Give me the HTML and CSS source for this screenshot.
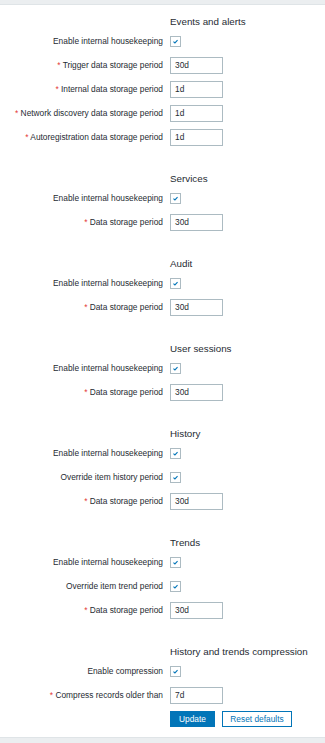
FILE: index.html
```html
<!DOCTYPE html>
<html>
<head>
<meta charset="utf-8">
<link rel="stylesheet" href="styles.css">
</head>
<body>
<div class="page">
  <form class="form">
    <section class="section">
      <div class="row head"><div class="label"></div><div class="field"><span class="title">Events and alerts</span></div></div>
      <div class="row"><div class="label">Enable internal housekeeping</div><div class="field"><span class="cb"><svg viewBox="0 0 11 11"><path d="M3 5.6 L4.8 7.2 L8 3.8" /></svg></span></div></div>
      <div class="row"><div class="label"><span class="req">*</span> Trigger data storage period</div><div class="field"><span class="input">30d</span></div></div>
      <div class="row"><div class="label"><span class="req">*</span> Internal data storage period</div><div class="field"><span class="input">1d</span></div></div>
      <div class="row"><div class="label"><span class="req">*</span> Network discovery data storage period</div><div class="field"><span class="input">1d</span></div></div>
      <div class="row"><div class="label"><span class="req">*</span> Autoregistration data storage period</div><div class="field"><span class="input">1d</span></div></div>
    </section>
    <section class="section">
      <div class="row head"><div class="label"></div><div class="field"><span class="title">Services</span></div></div>
      <div class="row"><div class="label">Enable internal housekeeping</div><div class="field"><span class="cb"><svg viewBox="0 0 11 11"><path d="M3 5.6 L4.8 7.2 L8 3.8" /></svg></span></div></div>
      <div class="row"><div class="label"><span class="req">*</span> Data storage period</div><div class="field"><span class="input">30d</span></div></div>
    </section>
    <section class="section">
      <div class="row head"><div class="label"></div><div class="field"><span class="title">Audit</span></div></div>
      <div class="row"><div class="label">Enable internal housekeeping</div><div class="field"><span class="cb"><svg viewBox="0 0 11 11"><path d="M3 5.6 L4.8 7.2 L8 3.8" /></svg></span></div></div>
      <div class="row"><div class="label"><span class="req">*</span> Data storage period</div><div class="field"><span class="input">30d</span></div></div>
    </section>
    <section class="section">
      <div class="row head"><div class="label"></div><div class="field"><span class="title">User sessions</span></div></div>
      <div class="row"><div class="label">Enable internal housekeeping</div><div class="field"><span class="cb"><svg viewBox="0 0 11 11"><path d="M3 5.6 L4.8 7.2 L8 3.8" /></svg></span></div></div>
      <div class="row"><div class="label"><span class="req">*</span> Data storage period</div><div class="field"><span class="input">30d</span></div></div>
    </section>
    <section class="section">
      <div class="row head"><div class="label"></div><div class="field"><span class="title">History</span></div></div>
      <div class="row"><div class="label">Enable internal housekeeping</div><div class="field"><span class="cb"><svg viewBox="0 0 11 11"><path d="M3 5.6 L4.8 7.2 L8 3.8" /></svg></span></div></div>
      <div class="row"><div class="label">Override item history period</div><div class="field"><span class="cb"><svg viewBox="0 0 11 11"><path d="M3 5.6 L4.8 7.2 L8 3.8" /></svg></span></div></div>
      <div class="row"><div class="label"><span class="req">*</span> Data storage period</div><div class="field"><span class="input">30d</span></div></div>
    </section>
    <section class="section">
      <div class="row head"><div class="label"></div><div class="field"><span class="title">Trends</span></div></div>
      <div class="row"><div class="label">Enable internal housekeeping</div><div class="field"><span class="cb"><svg viewBox="0 0 11 11"><path d="M3 5.6 L4.8 7.2 L8 3.8" /></svg></span></div></div>
      <div class="row"><div class="label">Override item trend period</div><div class="field"><span class="cb"><svg viewBox="0 0 11 11"><path d="M3 5.6 L4.8 7.2 L8 3.8" /></svg></span></div></div>
      <div class="row"><div class="label"><span class="req">*</span> Data storage period</div><div class="field"><span class="input">30d</span></div></div>
    </section>
    <section class="section">
      <div class="row head"><div class="label"></div><div class="field"><span class="title">History and trends compression</span></div></div>
      <div class="row"><div class="label">Enable compression</div><div class="field"><span class="cb"><svg viewBox="0 0 11 11"><path d="M3 5.6 L4.8 7.2 L8 3.8" /></svg></span></div></div>
      <div class="row"><div class="label"><span class="req">*</span> Compress records older than</div><div class="field"><span class="input">7d</span></div></div>
      <div class="row"><div class="label"></div><div class="field buttons"><span class="btn primary">Update</span><span class="btn secondary">Reset defaults</span></div></div>
    </section>
  </form>
</div>
</body>
</html>
```
FILE: styles.css
```css
html, body {
  margin: 0;
  padding: 0;
}
body {
  background: #ebeef0;
  font-family: "Liberation Sans", Arial, sans-serif;
  color: #1f2c33;
  font-size: 8.35px;
  height: 743px;
}
.page {
  margin-top: 4px;
  background: #ffffff;
  border-top: 1px solid #dfe4e7;
  border-bottom: 1px solid #dfe4e7;
  height: 734px;
  box-sizing: border-box;
}
.form {
  padding-top: 8px;
  display: flex;
  flex-direction: column;
  gap: 21px;
}
.section {
  display: flex;
  flex-direction: column;
}
.row {
  display: grid;
  grid-template-columns: 163px 1fr;
  column-gap: 7px;
  height: 24px;
  align-items: center;
}
.row.head {
  height: 16px;
}
.label {
  text-align: right;
  white-space: nowrap;
}
.req {
  color: #e33734;
}
.title {
  font-size: 9.8px;
}
.field {
  display: flex;
  align-items: center;
}
.cb {
  width: 11px;
  height: 11px;
  box-sizing: border-box;
  border: 1px solid #acbbc2;
  display: block;
}
.cb svg {
  display: block;
  width: 9px;
  height: 9px;
  fill: none;
  stroke: #0275b8;
  stroke-width: 1.3;
}
.input {
  width: 53px;
  height: 17px;
  box-sizing: border-box;
  border: 1px solid #acbbc2;
  padding: 0 4px;
  line-height: 15px;
  font-size: 8.35px;
}
.buttons {
  gap: 7px;
}
.btn {
  height: 16px;
  box-sizing: border-box;
  line-height: 14px;
  text-align: center;
  font-size: 8.35px;
}
.btn.primary {
  width: 45px;
  background: #0275b8;
  border: 1px solid #0275b8;
  color: #ffffff;
}
.btn.secondary {
  width: 70px;
  border: 1px solid #0275b8;
  color: #0275b8;
  background: #ffffff;
}
```
